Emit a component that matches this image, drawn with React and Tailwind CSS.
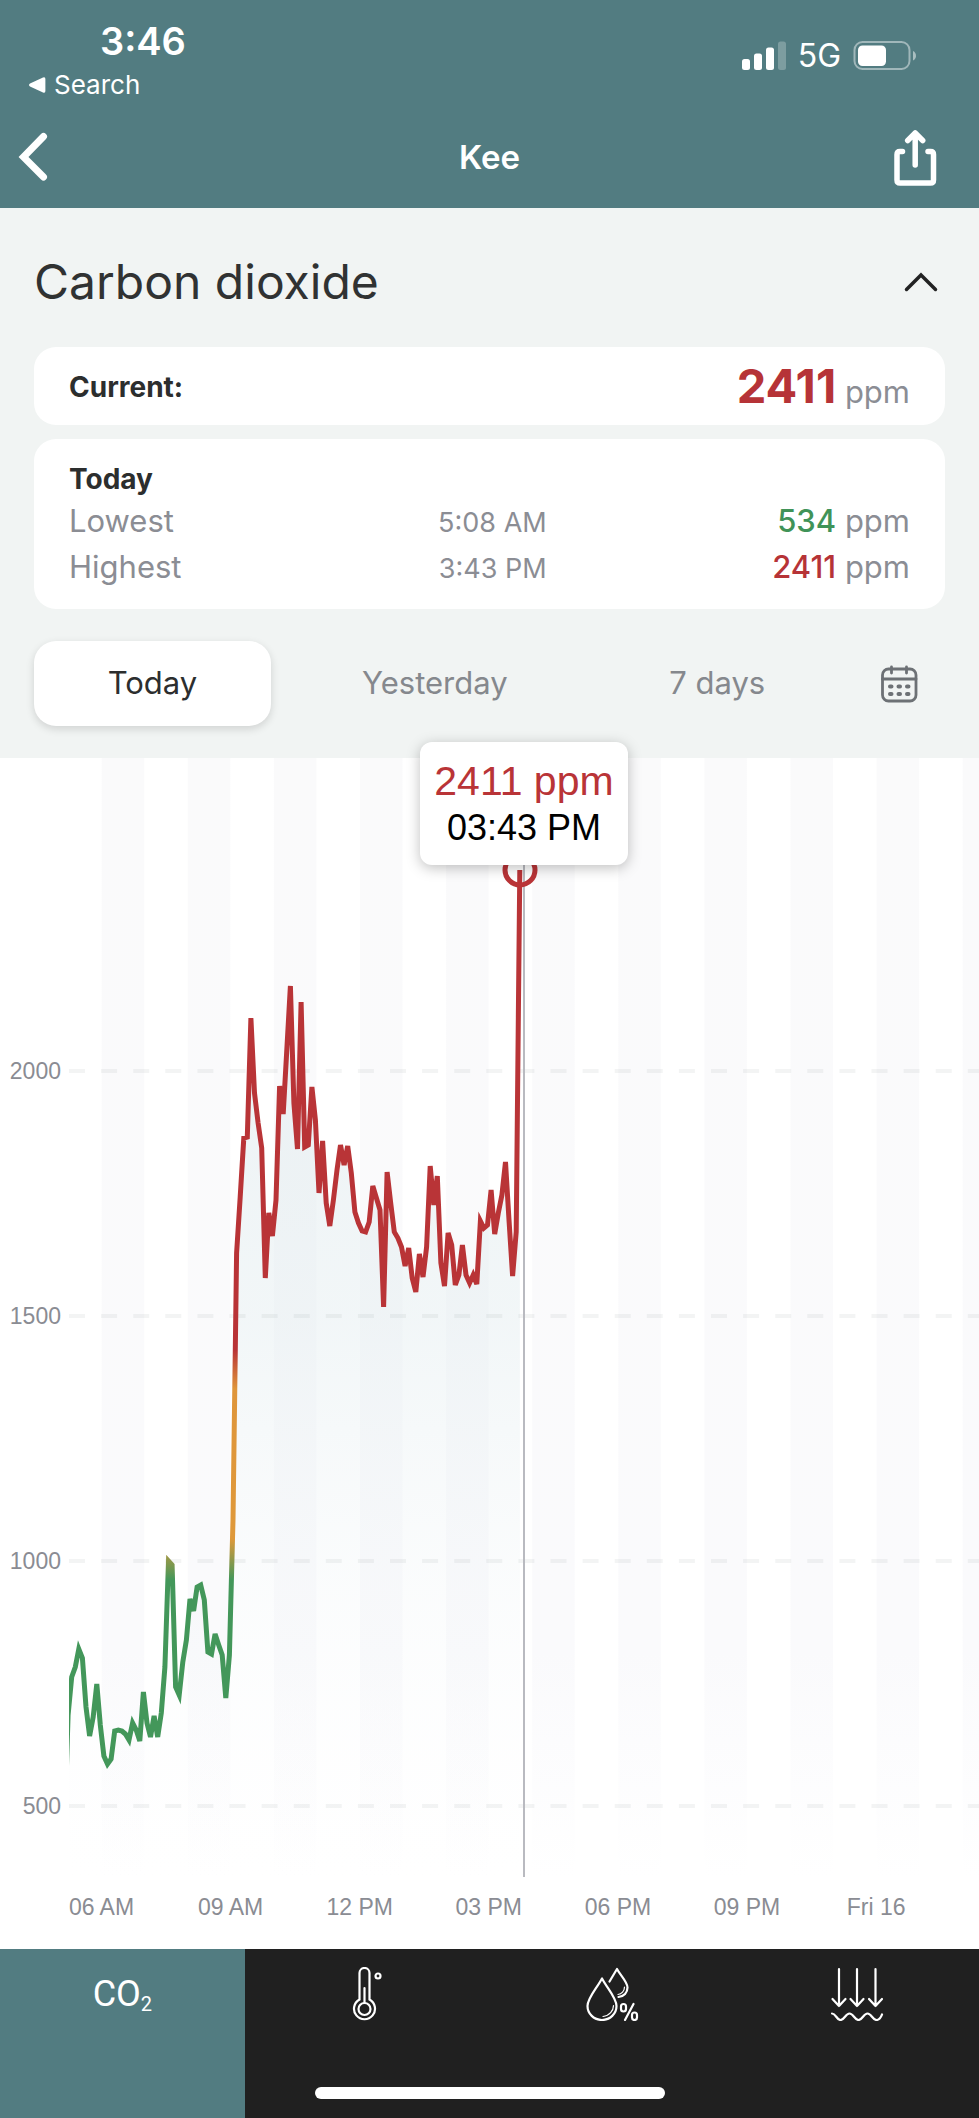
import React from "react";

const SANS = "font-['Inter',sans-serif]";

// Trace heights in chart units, one sample every five minutes.
const TRACE = [
  1830, 1715, 1677, 1667, 1649, 1658, 1707, 1736, 1717, 1684, 1725, 1756, 1764, 1759, 1731, 1730, 1731,
  1734, 1740, 1723, 1730, 1741, 1692, 1723, 1737, 1716, 1737, 1713, 1667, 1561, 1565, 1687, 1695,
  1662, 1640, 1599, 1611, 1587, 1585, 1600, 1652, 1654, 1634, 1645, 1655, 1698, 1655, 1520, 1253,
  1197, 1138, 1137, 1018, 1093, 1123, 1148, 1278, 1213, 1236, 1200, 1086, 1114, 1050, 986, 1103,
  1149, 1002, 1147, 1145, 1087, 1120, 1193, 1141, 1203, 1226, 1200, 1170, 1145, 1165, 1146, 1173,
  1212, 1223, 1231, 1232, 1222, 1186, 1198, 1210, 1307, 1172, 1203, 1232, 1238, 1247, 1266, 1248,
  1278, 1292, 1254, 1277, 1247, 1166, 1205, 1176, 1263, 1286, 1233, 1245, 1285, 1275, 1245, 1275,
  1283, 1275, 1284, 1221, 1228, 1225, 1190, 1234, 1213, 1195, 1162, 1220, 1276, 1232, 870,
];
const LINE = TRACE.map((y, i) => `${(64.5 + i * 3.585).toFixed(1)},${y}`).join(" ");
const AREA = `64,1877 ${LINE} 520,1877`;

const Y_TICKS = [
  { label: "2000", y: 1071 },
  { label: "1500", y: 1316 },
  { label: "1000", y: 1561 },
  { label: "500", y: 1806 },
];
const X_TICKS = ["06 AM", "09 AM", "12 PM", "03 PM", "06 PM", "09 PM", "Fri 16"];

function StatusBar() {
  return (
    <div className="flex items-start justify-between pt-5 pr-[62px] pl-7">
      <div>
        <div className="pl-[72px] text-[38px] leading-[42px] font-semibold">3:46</div>
        <a href="#search" className="flex items-center gap-2 text-[26px] leading-[46px]">
          <svg className="h-4 w-[18px]" viewBox="0 0 18 16" fill="currentColor" aria-hidden="true">
            <path d="M2 6.6 15 .5q2.4-.9 2.4 1.5v12q0 2.4-2.4 1.5L2 9.4Q0 8 2 6.600Z" />
          </svg>
          Search
        </a>
      </div>
      <div className="flex h-[72px] items-center gap-3">
        <svg className="h-[30px] w-[46px]" viewBox="0 0 46 30" fill="currentColor" aria-hidden="true">
          <rect x="2" y="18" width="8" height="11" rx="2.500" />
          <rect x="14" y="12.500" width="8" height="16.500" rx="2.500" />
          <rect x="26" y="6.500" width="8" height="22.500" rx="2.500" />
          <rect x="38" y="0.500" width="8" height="28.500" rx="2.500" opacity=".25" />
        </svg>
        <span className="text-[32px] leading-8">5G</span>
        <svg className="h-[30px] w-[64px]" viewBox="0 0 64 30" fill="none" aria-hidden="true">
          <rect x="1.500" y="1" width="55" height="27" rx="8" stroke="#fff" strokeOpacity=".45" strokeWidth="2" />
          <rect x="5" y="4.500" width="28" height="20.500" rx="4.500" fill="#fff" />
          <path d="M60 10v9.500q3-1.500 3-4.750t-3-4.750Z" fill="#fff" fillOpacity=".5" />
        </svg>
      </div>
    </div>
  );
}

function AppHeader() {
  return (
    <header className="bg-[#527c81] text-white">
      <StatusBar />
      <div className="grid h-[100px] grid-cols-[1fr_auto_1fr] items-center px-4 pb-0.5">
        <button type="button" aria-label="Back" className="justify-self-start">
          <svg className="h-[50px] w-8" viewBox="0 0 32 50" fill="none" stroke="currentColor" strokeWidth="7" strokeLinecap="round" aria-hidden="true">
            <path d="M27.500 4.500 7.500 25 27.500 45" />
          </svg>
        </button>
        <h1 className="text-[33px] leading-10 font-semibold">Kee</h1>
        <button type="button" aria-label="Share" className="mr-6 justify-self-end">
          <svg className="h-[60px] w-[46px]" viewBox="0 0 46 60" fill="none" stroke="currentColor" strokeWidth="5.500" strokeLinecap="round" strokeLinejoin="round" aria-hidden="true">
            <path d="M9.500 24.500H7q-3 0-3 3V53q0 3 3 3h30.500q3 0 3-3V27.500q0-3-3-3H35" />
            <path d="M22.200 38V6M14.700 13.500l7.500-7.500 7.500 7.500" />
          </svg>
        </button>
      </div>
    </header>
  );
}

function Summary() {
  const rows = [
    { name: "Lowest", time: "5:08 AM", value: "534", tone: "text-[#409358]" },
    { name: "Highest", time: "3:43 PM", value: "2411", tone: "text-[#b63337]" },
  ];
  return (
    <section className="px-[34px] pt-[34px]">
      <div className="flex h-[80px] items-center justify-between pr-[7px]">
        <h2 className="text-[48px] leading-[60px] text-[#303232]">Carbon dioxide</h2>
        <button type="button" aria-label="Collapse">
          <svg className="h-5 w-[34px]" viewBox="0 0 34 20" fill="none" stroke="#222" strokeWidth="3.500" strokeLinecap="round" aria-hidden="true">
            <path d="M2.500 17.500 17 3l14.500 14.500" />
          </svg>
        </button>
      </div>
      <div className="mt-[25px] flex h-[78px] items-center justify-between rounded-[22px] bg-white px-[35px]">
        <h3 className="pt-0.5 text-[28px] font-bold text-[#2c2e2e]">Current:</h3>
        <p className="text-[31px] text-[#8b8d94]">
          <strong className="text-[47px] leading-[60px] font-bold text-[#b63337]">2411</strong> ppm
        </p>
      </div>
      <div className="mt-3.5 rounded-[22px] bg-white px-[35px] pt-[21px] pb-[19px]">
        <h3 className="text-[28px] leading-[38px] font-bold text-[#2c2e2e]">Today</h3>
        <table className="w-full table-fixed text-[31px] leading-[46px] text-[#8b8d94]">
          <tbody>
            {rows.map((r) => (
              <tr key={r.name}>
                <th scope="row" className="p-0 text-left align-top font-normal">{r.name}</th>
                <td className="p-0 pt-1 pr-[83px] text-right align-top text-[27px] leading-[42px]">{r.time}</td>
                <td className="p-0 text-right align-top">
                  <span className={`font-medium ${r.tone}`}>{r.value}</span> ppm
                </td>
              </tr>
            ))}
          </tbody>
        </table>
      </div>
      <nav aria-label="Period" className="mt-8 flex h-[85px] items-stretch text-[31px] text-[#85888d]">
        <button type="button" aria-pressed="true" className="w-[26%] rounded-[22px] bg-white text-[#2c2e2e] shadow-[0_3px_8px_rgba(0,0,0,0.14)]">
          Today
        </button>
        <button type="button" className="w-[36%]">Yesterday</button>
        <button type="button" className="w-[26%]">7 days</button>
        <button type="button" aria-label="Choose dates" className="flex flex-1 items-center justify-end pr-[25px] text-[#6d7175]">
          <svg className="h-10 w-10" viewBox="0 0 40 40" fill="none" stroke="currentColor" strokeWidth="2.800" strokeLinecap="round" aria-hidden="true">
            <rect x="2.500" y="5" width="33.500" height="32" rx="6" />
            <path d="M2.500 15h33.500M11.500 3v6M26.500 3v6" />
            <path d="M10 22.500h1.500M18.500 22.500h1.500M27 22.500h1.500M10 30h1.500M18.500 30h1.500M27 30h1.500" strokeWidth="4" />
          </svg>
        </button>
      </nav>
    </section>
  );
}

function Chart() {
  return (
    <section className="relative bg-white">
      <svg className="block h-auto w-full" viewBox="0 758 979 1191" role="img" aria-label="Carbon dioxide in ppm over the day">
        <defs>
          <linearGradient id="stripe" gradientUnits="userSpaceOnUse" x1="0" y1="757" x2="0" y2="1877">
            <stop offset="0" stopColor="#fafafb" />
            <stop offset=".8" stopColor="#fafafc" />
            <stop offset="1" stopColor="#fff" />
          </linearGradient>
          <linearGradient id="area" gradientUnits="userSpaceOnUse" x1="0" y1="870" x2="0" y2="1877">
            <stop offset="0" stopColor="#dce8eb" stopOpacity=".6" />
            <stop offset=".45" stopColor="#e2ecef" stopOpacity=".45" />
            <stop offset="1" stopColor="#f8f9fb" stopOpacity="0" />
          </linearGradient>
          <linearGradient id="level" gradientUnits="userSpaceOnUse" x1="0" y1="1350" x2="0" y2="1580">
            <stop offset="0" stopColor="#b93437" />
            <stop offset=".17" stopColor="#df963a" />
            <stop offset=".82" stopColor="#df993a" />
            <stop offset="1" stopColor="#43975a" />
          </linearGradient>
          <clipPath id="plot">
            <rect x="69" y="757" width="910" height="1120" />
          </clipPath>
        </defs>
        {Array.from({ length: 11 }, (_, i) => (
          <rect key={i} x={101.7 + i * 86.1} y="757" width="42.500" height="1120" fill="url(#stripe)" />
        ))}
        <polygon points={AREA} fill="url(#area)" clipPath="url(#plot)" />
        {Y_TICKS.map((t) => (
          <g key={t.label}>
            <line x1="69" x2="979" y1={t.y} y2={t.y} stroke="#8e9096" strokeOpacity=".1" strokeWidth="4" strokeDasharray="16 16.100" />
            <text x="61" y={t.y + 8} textAnchor="end" className="font-['Liberation_Sans',sans-serif] text-[23px]" fill="#8a8c93">
              {t.label}
            </text>
          </g>
        ))}
        {X_TICKS.map((label, i) => (
          <text key={label} x={101.500 + i * 129.1} y="1915" textAnchor="middle" className="font-['Liberation_Sans',sans-serif] text-[23px]" fill="#8a8c93">
            {label}
          </text>
        ))}
        <line x1="524" x2="524" y1="860" y2="1877" stroke="#b9bac0" strokeWidth="2" />
        <polyline points={LINE} fill="none" stroke="url(#level)" strokeWidth="5" clipPath="url(#plot)" />
        <circle cx="520" cy="870" r="15" fill="none" stroke="#b93437" strokeWidth="5" />
      </svg>
      <div className="absolute -top-4 left-[43%] -ml-px h-[123px] w-[208px] rounded-xl bg-white pt-[15px] text-center font-['Liberation_Sans',sans-serif] whitespace-nowrap shadow-[0_3px_14px_rgba(0,0,0,0.25)]">
        <div className="text-[41px] leading-[48px] text-[#b93437]">2411 ppm</div>
        <div className="text-[36px] leading-[46px] text-black">03:43 PM</div>
      </div>
    </section>
  );
}

function TabBar() {
  return (
    <nav aria-label="Sensors" className="relative grid h-[169px] grid-cols-4 bg-[#202020] text-white">
      <button type="button" className="flex items-start justify-center bg-[#527c81] pt-5 font-['Roboto',sans-serif] text-[36px] leading-[50px]" aria-current="page">
        <span>CO<sub className="text-[20px]">2</sub></span>
      </button>
      <button type="button" aria-label="Temperature" className="flex items-start justify-center pt-[18px]">
        <svg className="h-[54px] w-[30px]" viewBox="0 0 30 54" fill="none" stroke="currentColor" strokeWidth="2.200" strokeLinecap="round" aria-hidden="true">
          <path d="M7.500 32.500V6a5 5 0 0 1 10 0v26.500a10.500 10.500 0 1 1-10 0Z" />
          <circle cx="12.500" cy="42" r="6" />
          <path d="M12.500 35.500V21" />
          <circle cx="26" cy="9" r="2.500" />
        </svg>
      </button>
      <button type="button" aria-label="Humidity" className="flex items-start justify-center pt-[18px]">
        <svg className="h-[54px] w-[54px]" viewBox="0 0 54 54" fill="none" stroke="currentColor" strokeWidth="2.200" strokeLinecap="round" strokeLinejoin="round" aria-hidden="true">
          <path d="M17 11.500C12 21 2.500 31 2.500 39a14.500 14 0 0 0 29 0C31.500 31 22 21 17 11.500Z" />
          <path d="M24.500 14.500 32 2c3 6 10.500 13 10.500 18.500 0 5-3.500 9-9 9.500" />
          <path d="M28.500 38.500c0 5-4 10.500-10.500 11M39.500 20c0 4-3 7-6.500 7.500" strokeWidth="1.200" />
          <rect x="36" y="37" width="5" height="7.500" rx="2.500" />
          <rect x="47" y="45.500" width="5" height="7.500" rx="2.500" />
          <path d="M48.500 37 40 53" />
        </svg>
      </button>
      <button type="button" aria-label="Pressure" className="flex items-start justify-center pt-[18px]">
        <svg className="h-[54px] w-[54px]" viewBox="0 0 54 54" fill="none" stroke="currentColor" strokeWidth="2.200" strokeLinecap="round" strokeLinejoin="round" aria-hidden="true">
          <path d="M9 2v37M2.500 32l6.500 7 6.500-7M27 2v37M20.500 32l6.500 7 6.500-7M45.500 2v37M39 32l6.500 7 6.500-7" />
          <path d="M2 46.500c4 0 4.500 6.500 8.500 6.500s5-6.500 9-6.500 5 6.500 9 6.500 5-6.500 9-6.500 5 6.500 9 6.500c3.500 0 4.500-3 5.500-5.500" />
        </svg>
      </button>
      <div className="absolute bottom-[19px] left-1/2 h-3 w-[350px] -translate-x-1/2 rounded-full bg-white" />
    </nav>
  );
}

export default function App() {
  return (
    <div className={`${SANS} bg-[#f1f4f3]`}>
      <AppHeader />
      <main>
        <Summary />
        <div className="pt-8">
          <Chart />
        </div>
      </main>
      <TabBar />
    </div>
  );
}
